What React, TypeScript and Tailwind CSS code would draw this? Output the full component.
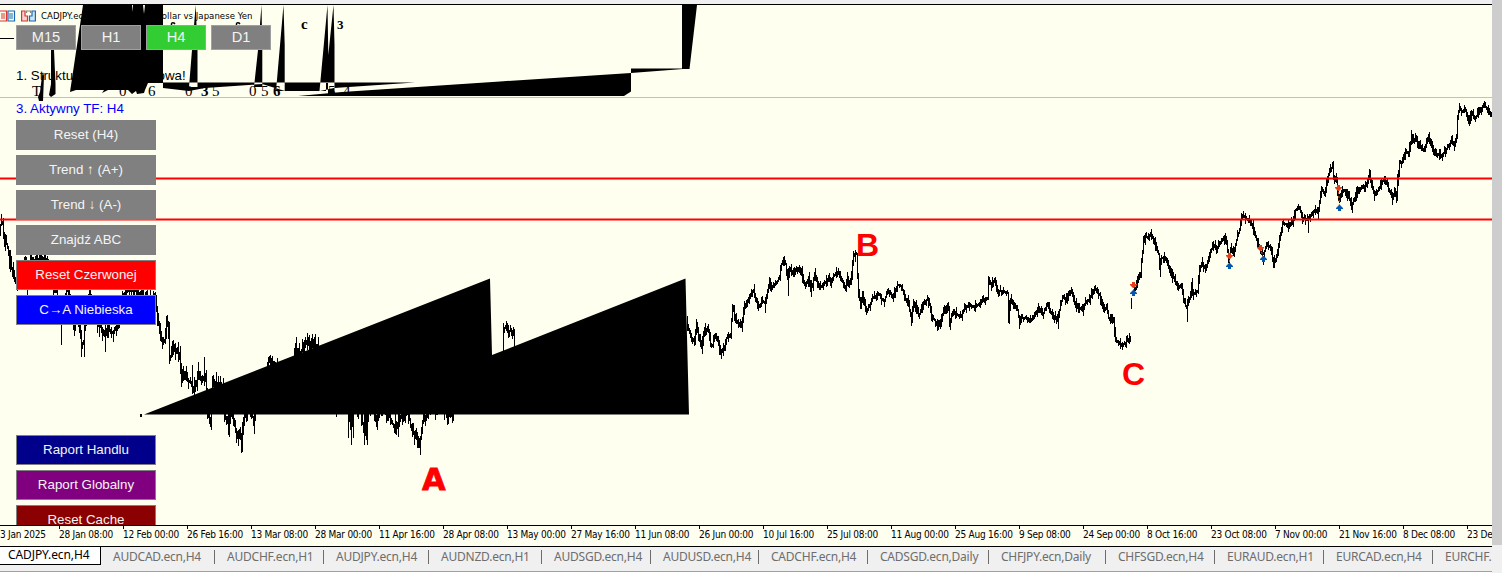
import { clsx } from "clsx";

type Point = [x: number, y: number];
type Bar = [x: number, top: number, bottom: number];

const TIMEFRAMES = ["M15", "H1", "H4", "D1"];
const ACTIVE_TIMEFRAME = "H4";

const ACTIONS = [
  { label: "Reset (H4)", className: "border-[#808080] bg-[#808080]" },
  { label: "Trend ↑ (A+)", className: "border-[#808080] bg-[#808080]" },
  { label: "Trend ↓ (A-)", className: "border-[#808080] bg-[#808080]" },
  { label: "Znajdź ABC", className: "border-[#808080] bg-[#808080]" },
  { label: "Reset Czerwonej", className: "border-[#808080] bg-[#ff0000]" },
  { label: "C→A Niebieska", className: "border-[#808080] bg-[#0000ff]" },
];

const REPORTS = [
  { label: "Raport Handlu", className: "border-[#808080] bg-[#00008b]" },
  { label: "Raport Globalny", className: "border-[#808080] bg-[#800080]" },
  { label: "Reset Cache", className: "border-[#808080] bg-[#8b0000]" },
];

const AXIS_LABELS = [
  "28 Jan 08:00",
  "12 Feb 00:00",
  "26 Feb 16:00",
  "13 Mar 08:00",
  "28 Mar 00:00",
  "11 Apr 16:00",
  "28 Apr 08:00",
  "13 May 00:00",
  "27 May 16:00",
  "11 Jun 08:00",
  "26 Jun 00:00",
  "10 Jul 16:00",
  "25 Jul 08:00",
  "11 Aug 00:00",
  "25 Aug 16:00",
  "9 Sep 08:00",
  "24 Sep 00:00",
  "8 Oct 16:00",
  "23 Oct 08:00",
  "7 Nov 00:00",
  "21 Nov 16:00",
  "8 Dec 08:00",
  "23 De",
];

const TABS = [
  { label: "AUDCAD.ecn,H4", width: "w-[114px]" },
  { label: "AUDCHF.ecn,H1", width: "w-[109px]" },
  { label: "AUDJPY.ecn,H4", width: "w-[105px]" },
  { label: "AUDNZD.ecn,H1", width: "w-[113px]" },
  { label: "AUDSGD.ecn,H4", width: "w-[109px]" },
  { label: "AUDUSD.ecn,H4", width: "w-[108px]" },
  { label: "CADCHF.ecn,H4", width: "w-[109px]" },
  { label: "CADSGD.ecn,Daily", width: "w-[121px]" },
  { label: "CHFJPY.ecn,Daily", width: "w-[117px]" },
  { label: "CHFSGD.ecn,H4", width: "w-[109px]" },
  { label: "EURAUD.ecn,H1", width: "w-[109px]" },
  { label: "EURCAD.ecn,H4", width: "w-[109px]" },
];

// Mid prices in chart pixels; every run is continuous, gaps fall between runs.
const RUNS: Point[][] = [
  [
    [0, 226], [3, 222], [4, 234], [6, 240], [8, 248], [10, 260], [12, 268], [14, 278], [17, 285],
    [22, 272], [25, 258], [29, 268], [32, 259], [38, 262], [44, 258], [50, 262], [54, 290], [57, 292],
    [61, 318], [64, 300], [68, 288], [71, 300], [74, 325], [78, 318], [82, 345], [84, 342], [86, 318],
    [90, 290], [94, 312], [98, 325], [102, 328], [105, 336], [108, 328], [112, 333], [117, 328], [120, 322],
    [124, 294], [128, 290], [134, 289], [140, 294], [148, 300], [154, 297], [156, 305], [158, 315],
    [160, 332], [163, 341], [165, 340], [167, 322], [169, 328], [170, 360], [172, 352], [174, 347],
    [177, 350], [180, 356], [182, 377], [185, 372], [188, 381], [191, 382], [194, 390], [197, 382],
    [199, 374], [202, 379], [206, 378], [208, 415], [211, 420], [213, 384], [216, 383], [222, 386],
    [224, 412], [229, 424], [232, 412], [235, 425], [238, 438], [240, 432], [242, 445], [243, 425],
    [245, 412], [247, 420], [249, 405], [252, 412], [254, 422], [256, 410],
  ],
  [[267, 366], [269, 362], [272, 360], [274, 365], [277, 366]],
  [[294, 356], [296, 348], [298, 350], [301, 354], [304, 345], [307, 342], [310, 346], [313, 341], [316, 345], [319, 346]],
  [
    [348, 412], [351, 424], [353, 420], [354, 410], [361, 410], [364, 430], [367, 430], [369, 410],
    [375, 412], [377, 424], [380, 412], [388, 412], [392, 422], [395, 428], [398, 426], [400, 416],
    [403, 418], [406, 410], [409, 415], [412, 430], [415, 435], [418, 440], [420, 447], [422, 430],
    [424, 415], [426, 420], [429, 410], [446, 410], [448, 415], [452, 415], [454, 409],
  ],
  [[503, 345], [504, 330], [506, 326], [508, 332], [511, 331], [514, 334], [515, 344]],
  [
    [687, 318], [688, 326], [690, 333], [692, 339], [695, 342], [697, 325], [699, 335], [701, 344],
    [702, 348], [704, 332], [706, 329], [709, 331], [711, 344], [713, 346], [715, 335], [717, 337],
    [719, 345], [721, 354], [723, 350], [725, 346], [727, 338], [731, 335], [733, 306], [735, 315],
    [737, 322], [741, 324], [742, 327], [745, 306], [748, 301], [750, 296], [752, 293], [754, 290],
    [756, 298], [758, 304], [760, 306], [762, 302], [765, 302], [767, 295], [770, 283], [772, 289],
    [774, 285], [777, 282], [780, 278], [781, 266], [784, 260], [786, 264], [788, 278], [790, 268],
    [793, 274], [795, 273], [798, 268], [800, 268], [802, 272], [804, 282], [806, 286], [809, 278],
    [811, 288], [813, 285], [815, 273], [817, 280], [820, 289], [823, 284], [826, 282], [829, 277],
    [831, 284], [834, 276], [837, 272], [840, 274], [843, 282], [846, 288], [848, 278], [850, 284],
    [852, 275], [854, 254], [857, 254], [858, 275], [859, 292], [861, 307], [863, 293], [865, 305],
    [867, 311], [870, 305], [873, 298], [877, 295], [880, 294], [882, 299], [885, 301], [888, 290],
    [890, 293], [893, 297], [896, 290], [898, 285], [901, 286], [904, 292], [906, 300], [908, 301],
    [910, 311], [912, 320], [914, 302], [916, 306], [919, 316], [922, 310], [925, 301], [928, 300],
    [930, 305], [932, 317], [935, 320], [938, 326], [942, 320], [944, 310], [947, 306], [949, 308],
    [950, 325], [952, 316], [955, 312], [958, 315], [962, 315], [965, 308], [970, 305], [975, 307],
    [980, 303], [985, 300], [988, 298], [989, 280], [992, 285], [995, 279], [998, 291], [1003, 291],
    [1008, 293], [1009, 318], [1011, 299], [1014, 303], [1018, 310], [1020, 323], [1022, 318],
    [1026, 318], [1030, 321], [1034, 318], [1037, 312], [1039, 308], [1043, 315], [1046, 308],
    [1048, 304], [1051, 312], [1055, 317], [1058, 321], [1060, 310], [1063, 296], [1066, 300],
    [1069, 295], [1072, 291], [1074, 300], [1077, 306], [1080, 308], [1083, 310], [1086, 302],
    [1090, 300], [1093, 290], [1096, 290], [1100, 295], [1103, 308], [1107, 308], [1109, 318],
    [1114, 322], [1116, 340], [1119, 343], [1122, 345], [1125, 344], [1128, 340], [1131, 337],
  ],
  [
    [1134, 288], [1136, 289], [1138, 280], [1141, 274], [1142, 260], [1144, 242], [1146, 236],
    [1149, 238], [1151, 233], [1154, 240], [1157, 250], [1159, 254], [1160, 268], [1162, 258],
    [1165, 258], [1168, 262], [1170, 272], [1174, 278], [1177, 284], [1180, 287], [1182, 284],
    [1184, 301], [1187, 308], [1190, 298], [1192, 287], [1194, 294], [1198, 291], [1200, 270],
    [1202, 263], [1206, 269], [1208, 262], [1211, 250], [1214, 246], [1218, 248], [1222, 240],
    [1224, 238], [1227, 243], [1229, 260], [1231, 248], [1234, 253], [1237, 240], [1240, 229],
    [1242, 215], [1246, 218], [1250, 221], [1253, 226], [1255, 233], [1258, 243], [1261, 252],
    [1264, 254], [1267, 244], [1271, 248], [1274, 265], [1277, 257], [1280, 240], [1283, 223],
    [1286, 224], [1290, 226], [1293, 222], [1296, 210], [1300, 208], [1303, 219], [1308, 219],
    [1310, 216], [1315, 210], [1318, 213], [1320, 203], [1322, 188], [1325, 194], [1328, 178],
    [1330, 171], [1333, 166], [1334, 178], [1337, 180], [1339, 200], [1341, 194], [1344, 190],
    [1347, 192], [1350, 200], [1352, 207], [1355, 198], [1358, 190], [1362, 188], [1366, 186],
    [1370, 175], [1371, 182], [1375, 195], [1380, 188], [1383, 181], [1387, 182], [1390, 192],
    [1393, 199], [1395, 192], [1397, 198], [1398, 180], [1400, 163], [1403, 161], [1406, 152],
    [1409, 153], [1412, 138], [1416, 140], [1420, 145], [1424, 151], [1427, 142], [1429, 136],
    [1433, 149], [1437, 154], [1442, 156], [1445, 152], [1448, 147], [1452, 141], [1455, 146],
    [1457, 138], [1458, 116], [1460, 108], [1463, 112], [1466, 110], [1469, 123], [1472, 113],
    [1475, 119], [1480, 112], [1484, 104], [1487, 108], [1490, 114], [1492, 114],
  ],
];

const WICKS: Bar[] = [
  [27, 285, 295], [61, 325, 345], [74, 320, 336], [81, 330, 357], [84, 325, 357], [105, 335, 352],
  [192, 365, 384], [198, 362, 380], [204, 357, 386], [206, 370, 392], [213, 375, 386], [220, 376, 386],
  [223, 378, 388], [211, 414, 430], [229, 414, 437], [242, 430, 452], [254, 414, 434], [270, 355, 366],
  [277, 358, 366], [295, 343, 355], [307, 333, 350], [312, 334, 346], [348, 414, 438], [351, 414, 445],
  [353, 414, 438], [364, 414, 445], [365, 414, 436], [366, 414, 440], [367, 414, 445], [377, 414, 430],
  [395, 414, 434], [420, 440, 455], [452, 414, 422], [336, 414, 417], [140, 414, 417], [141, 414, 417],
  [503, 323, 350], [507, 323, 332], [514, 330, 340], [702, 340, 354], [721, 350, 359], [765, 300, 313],
  [788, 268, 296], [811, 280, 297], [784, 256, 266], [855, 250, 262], [938, 322, 330], [1009, 300, 324],
  [1058, 312, 329], [1131, 298, 309], [1160, 258, 277], [1151, 229, 240], [1187, 300, 322],
  [1192, 278, 292], [1229, 256, 263], [1263, 262, 265], [1274, 255, 268], [1308, 218, 233],
  [1333, 161, 180], [1369, 169, 180], [1392, 192, 205], [1411, 130, 145], [1122, 342, 350],
];

const TRADES: { sell: Point; buy: Point }[] = [
  { sell: [1133.5, 285], buy: [1133.5, 293] },
  { sell: [1229.5, 256], buy: [1229.5, 266] },
  { sell: [1260.5, 248], buy: [1263.5, 259] },
  { sell: [1338.5, 188], buy: [1339.5, 208] },
];

// Stable pseudo-random value in 0..1, so that the bars never move between renders.
function noise(seed: number) {
  const n = Math.sin(seed * 12.9898) * 43758.5453;
  return n - Math.floor(n);
}

function barsPath() {
  let d = "";
  for (const run of RUNS) {
    for (let i = 0; i < run.length - 1; i++) {
      const [x0, y0] = run[i];
      const [x1, y1] = run[i + 1];
      for (let x = x0; x < x1; x++) {
        const a = y0 + ((y1 - y0) * (x - x0)) / (x1 - x0);
        const b = y0 + ((y1 - y0) * (x + 1 - x0)) / (x1 - x0);
        const reach = x < 460 ? 10 : 5.5;
        const top = Math.round(Math.min(a, b) - 1 - noise(x) ** 2 * reach);
        const bottom = Math.round(Math.max(a, b) + 1 + noise(x + 0.37) ** 2 * reach);
        d += `M${x} ${top}h1V${bottom}h-1z`;
      }
    }
  }
  for (const [x, top, bottom] of WICKS) {
    d += `M${x} ${top}h1V${bottom}h-1z`;
  }
  return d;
}

const PRICE_PATH = barsPath();

function PriceChart() {
  return (
    <svg
      className="absolute inset-0"
      width="1492"
      height="520"
      viewBox="0 5 1492 520"
      fill="#000"
    >
      <rect x="0" y="97" width="1492" height="1" fill="#c0c0c0" />
      <path d={PRICE_PATH} shapeRendering="crispEdges" />
      <path d="M0 178.5H1492M0 219.5H1492" stroke="#ff0000" strokeWidth="2" />

      {/* filled price channels */}
      <path d="M144 414.5L490 278.5L492 355L685.5 278.5L689 414.5Z" />
      <path
        fillRule="evenodd"
        d="M83 5H163V83H148L145 90L144 93L137 94L136 91L132 94L128 90H108L102 93L104 90H76L70 92Z
           M195.7 5L197.5 50V87H189L192 50Z
           M261.5 5L262.3 50V87H254L258 50Z
           M283.5 5L284.7 45V91H276Z
           M327.5 5L328.3 55L333.5 5L334.5 45V94H328V83H326V91H319.5Z
           M163 82.5H415L334 88L320 91H285L262 84L205 88L189 91L163 88V82.5Z"
      />
      <path d="M298 96L342 92L500 81.5L631 73V91.5L624 96Z" />
      <path d="M631 68.5H682V5H697L689.5 69H683L631 73Z" />
      <path d="M51 50H54L55.500 84V94L51 97L49 95L51 84ZM42 76L43 72L44 76L43 101H39L38 97L40 92ZM0 38H14V39H0Z" />
      <path d="M132 5H133V12ZM143 5H145L144 14Z" fill="#fffff0" />

      <g fontFamily="Liberation Serif, serif" fontSize="15">
        <text x="32" y="96">T</text>
        <text x="119" y="96">0</text>
        <text x="148" y="96">6</text>
        <text x="185" y="96">0</text>
        <text x="201" y="96" fontWeight="700">3</text>
        <text x="212" y="96">5</text>
        <text x="249" y="96">0</text>
        <text x="261" y="96">5</text>
        <text x="273" y="96" fontWeight="700">6</text>
        <text x="328" y="96">5</text>
        <text x="343" y="96">4</text>
        <text x="301" y="29" fontWeight="700">c</text>
        <text x="337" y="29" fontSize="13" fontWeight="700">3</text>
      </g>
      <path
        d="M106.500 25Q106 22 109 23L110 24M171.500 25Q171 22 174 23L175 24M236.500 25Q236 22 239 23L240 24"
        fill="none"
        stroke="#000"
        strokeWidth="1.5"
      />

      <g fill="#ff0000" fontSize="32" fontWeight="700" fontFamily="Liberation Sans, sans-serif">
        <text
          x="422"
          y="490"
          fontFamily="DejaVu Sans, sans-serif"
          fontSize="30.5"
          stroke="#ff0000"
          strokeWidth="0.8"
        >
          A
        </text>
        <text x="856" y="256">B</text>
        <text x="1122" y="385">C</text>
      </g>

      {TRADES.map(({ sell, buy }) => (
        <g key={sell[0]}>
          <path
            d={`M${sell[0]} ${sell[1]}L${buy[0]} ${buy[1]}`}
            stroke="#e8502a"
            strokeDasharray="2 2"
          />
          <path
            transform={`translate(${sell[0]} ${sell[1]})`}
            d="M-1.5-3H1.5V-1H3.5V0L.5 3H-.5L-3.5 0V-1H-1.5Z"
            fill="#e0401c"
          />
          <path
            transform={`translate(${buy[0]} ${buy[1]})`}
            d="M-.5-3H.5L3.5 0V1H1.5V3H-1.5V1H-3.5V0Z"
            fill="#0058b0"
          />
        </g>
      ))}
    </svg>
  );
}

function SymbolHeader() {
  return (
    <div className="flex h-5 items-center pt-0.5 text-[9.5px] tracking-[0.04px]">
      <svg width="36" height="12" viewBox="0 0 36 12" fill="none" strokeWidth="1.2">
        <path d="M0 1H6.5V11H0M1 4H5M1 6H5M1 8H5" stroke="#d8332c" />
        <path d="M14.5 1H8V11H14.5ZM9 4H13M9 6H13M9 8H13" stroke="#1769b5" />
        <path d="M25 1H21.600V11H27.500V6H25Z" fill="#fbd5d3" stroke="#d8332c" />
        <path d="M32 1H35.400V11H29.500V6H32Z" fill="#cfe4f7" stroke="#1769b5" />
        <path d="M26.500 3V1H30.500V3" stroke="#888" />
      </svg>
      <span className="ml-[5px] whitespace-nowrap font-[DejaVu_Sans_Condensed,sans-serif] text-black">
        CADJPY.ecn, H4: Canadian Dollar vs Japanese Yen
      </span>
    </div>
  );
}

function PanelButton({ label, className }: { label: string; className: string }) {
  return (
    <button
      className={clsx(
        "flex h-[30px] w-[140px] shrink-0 items-center justify-center border pb-px text-[13.33px] text-[#f4f4f4]",
        className,
      )}
    >
      {label}
    </button>
  );
}

function ControlPanel() {
  return (
    <div className="flex w-[300px] flex-col pl-4">
      <div className="flex gap-[5px]">
        {TIMEFRAMES.map((tf) => (
          <button
            key={tf}
            className={clsx(
              "h-[25px] w-[60px] border border-[#a0a0a0] pb-px text-[14.67px] leading-none text-[#f4f4f4]",
              tf === ACTIVE_TIMEFRAME ? "bg-[#32cd32]" : "bg-[#808080]",
            )}
          >
            {tf}
          </button>
        ))}
      </div>
      <p className="mt-[18px] h-4 whitespace-nowrap text-[13.33px] leading-4 text-black">
        1. Struktura ABC wzrostowa!
      </p>
      <p className="mt-[17px] h-4 whitespace-nowrap text-[13.33px] leading-4 text-[#0000ff]">
        3. Aktywny TF: H4
      </p>
      <div className="mt-[3px] flex flex-col gap-[5px]">
        {ACTIONS.map((action) => (
          <PanelButton key={action.label} {...action} />
        ))}
      </div>
      <div className="mt-[110px] flex flex-col gap-[5px]">
        {REPORTS.map((report) => (
          <PanelButton key={report.label} {...report} />
        ))}
      </div>
    </div>
  );
}

function TimeAxis() {
  return (
    <div className="flex h-[21px] overflow-hidden border-t border-black font-[DejaVu_Sans_Condensed,sans-serif] text-[10px] tracking-[-0.25px] text-black">
      <div className="w-[59px] shrink-0 whitespace-nowrap pt-[3px] leading-3">3 Jan 2025</div>
      {AXIS_LABELS.map((label) => (
        <div key={label} className="w-16 shrink-0">
          <div className="h-[3px] w-px bg-black" />
          <div className="whitespace-nowrap leading-3">{label}</div>
        </div>
      ))}
    </div>
  );
}

function ChartTabs() {
  return (
    <div className="flex h-[25px] overflow-hidden border-t border-black bg-[#f0f0f0] font-[Noto_Sans,sans-serif] text-[12px] tracking-[-0.22px]">
      <div className="-mt-px flex h-[19px] w-[101px] shrink-0 items-center border-r border-b border-black bg-white pl-2 tracking-[-0.1px] text-black">
        CADJPY.ecn,H4
      </div>
      {TABS.map((tab) => (
        <div
          key={tab.label}
          className={clsx("flex h-[19px] shrink-0 items-center justify-between pl-3 text-[#6d6d6d]", tab.width)}
        >
          <span className="whitespace-nowrap">{tab.label}</span>
          <span className="h-[14px] w-px bg-[#6d6d6d]" />
        </div>
      ))}
      <div className="flex h-[19px] shrink-0 items-center pl-3 text-[#6d6d6d]">EURCHF.</div>
    </div>
  );
}

export default function App() {
  return (
    <div className="flex h-[573px] w-[1502px] overflow-hidden bg-[#fffff0] font-[Liberation_Sans,Arial,sans-serif]">
      <div className="flex w-[1492px] flex-col">
        <div className="h-[5px] shrink-0 border-b border-black bg-[#f0f0f0]" />
        <div className="relative h-[520px] shrink-0 overflow-hidden">
          <PriceChart />
          <div className="relative">
            <SymbolHeader />
            <ControlPanel />
          </div>
        </div>
        <TimeAxis />
        <ChartTabs />
        <div className="h-[2px] border-t border-[#a0a0a0] bg-white" />
      </div>
      <div className="flex w-[10px] flex-col bg-[#f0f0f0]">
        <div className="h-[545px] bg-[#cdcdcd]" />
      </div>
    </div>
  );
}
